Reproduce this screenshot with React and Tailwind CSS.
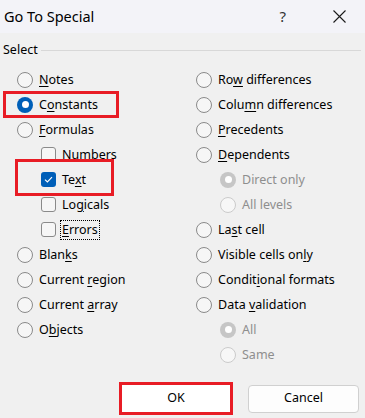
import React from "react";

const FONT = { fontFamily: '"Noto Sans", "Open Sans", sans-serif' };

// label with one underlined access key
function Label({ text, k, disabled }) {
  const i = k == null ? -1 : k;
  return (
    <span className={disabled ? "text-[#8e8e8e]" : "text-black"}>
      {i < 0 ? text : (
        <>
          {text.slice(0, i)}
          <span className="underline underline-offset-2">{text[i]}</span>
          {text.slice(i + 1)}
        </>
      )}
    </span>
  );
}

function Radio({ checked, disabled }) {
  if (disabled) {
    return checked ? (
      <span className="w-4 h-4 rounded-full bg-[#c6c6c6] flex items-center justify-center flex-shrink-0">
        <span className="w-[7px] h-[7px] rounded-full bg-white" />
      </span>
    ) : (
      <span className="w-4 h-4 rounded-full border border-[#cbcbcb] bg-[#f7f7f7] flex-shrink-0" />
    );
  }
  return checked ? (
    <span className="w-4 h-4 rounded-full bg-[#005fb8] flex items-center justify-center flex-shrink-0">
      <span className="w-[7px] h-[7px] rounded-full bg-white" />
    </span>
  ) : (
    <span className="w-4 h-4 rounded-full border border-[#8a8a8a] bg-[#f6f6f6] flex-shrink-0" />
  );
}

function Check({ checked }) {
  return checked ? (
    <span className="w-[15px] h-[15px] rounded-[3px] bg-[#005fb8] flex items-center justify-center flex-shrink-0">
      <svg width="9" height="7" viewBox="0 0 9 7" fill="none">
        <path d="M1 3.6 L3.4 6 L8 1.2" stroke="white" strokeWidth="1.2" />
      </svg>
    </span>
  ) : (
    <span className="w-[15px] h-[15px] rounded-[3px] border border-[#8a8a8a] bg-[#f6f6f6] flex-shrink-0" />
  );
}

function Row({ type, indent, checked, disabled, text, k, focus }) {
  return (
    <div className={`h-[25px] flex items-center ${indent ? "pl-[24px]" : ""}`}>
      {type === "check" ? <Check checked={checked} /> : <Radio checked={checked} disabled={disabled} />}
      <span className={`ml-[5px] px-px leading-[18px] ${focus ? "outline outline-1 outline-dotted outline-black" : ""}`}>
        <Label text={text} k={k} disabled={disabled} />
      </span>
    </div>
  );
}

const LEFT = [
  { text: "Notes", k: 0 },
  { text: "Constants", k: 1, checked: true },
  { text: "Formulas", k: 0 },
  { type: "check", indent: true, text: "Numbers", k: 1 },
  { type: "check", indent: true, text: "Text", k: 2, checked: true },
  { type: "check", indent: true, text: "Logicals", k: 2 },
  { type: "check", indent: true, text: "Errors", k: 0, focus: true },
  { text: "Blanks", k: 4 },
  { text: "Current region", k: 8 },
  { text: "Current array", k: 8 },
  { text: "Objects", k: 1 },
];

const RIGHT = [
  { text: "Row differences", k: 2 },
  { text: "Column differences", k: 4 },
  { text: "Precedents", k: 0 },
  { text: "Dependents", k: 0 },
  { indent: true, disabled: true, checked: true, text: "Direct only" },
  { indent: true, disabled: true, text: "All levels" },
  { text: "Last cell", k: 2 },
  { text: "Visible cells only", k: 16 },
  { text: "Conditional formats", k: 6 },
  { text: "Data validation", k: 5 },
  { indent: true, disabled: true, checked: true, text: "All" },
  { indent: true, disabled: true, text: "Same" },
];

export default function App() {
  return (
    <div className="w-[365px] h-[418px] bg-[#f0f0f0] relative overflow-hidden text-[12.5px]" style={FONT}>
      {/* Title bar */}
      <div className="h-[33px] bg-[#f3f3f8] flex items-center pl-[4px]">
        <span className="text-[14.5px] text-black">Go To Special</span>
        <span className="ml-auto text-[15px] text-[#333] mr-[47px]">?</span>
        <svg width="13" height="13" viewBox="0 0 13 13" className="mr-[19px]">
          <path d="M0.5 0.5 L12.5 12.5 M12.5 0.5 L0.5 12.5" stroke="#1a1a1a" strokeWidth="1.1" />
        </svg>
      </div>

      {/* Group legend */}
      <div className="mt-[9px] h-4 flex items-center pl-[3px] pr-[4px]">
        <span className="text-black">Select</span>
        <div className="flex-1 h-px bg-[#d8d8d8] ml-[3px]" />
      </div>

      <div className="mt-[9px] grid grid-cols-[179px_1fr] pl-[17px]">
        <div>{LEFT.map(r => <Row key={r.text} {...r} />)}</div>
        <div>{RIGHT.map(r => <Row key={r.text} {...r} />)}</div>
      </div>

      {/* Buttons */}
      <div className="absolute left-[119px] top-[382px] flex items-center">
        <button className="w-[114px] h-[33px] bg-white border-[3px] border-[#e81c25] text-black">OK</button>
        <button className="ml-[15px] w-[111px] h-[28px] bg-[#fdfdfd] border border-[#d0d0d0] rounded-[4px] text-black">Cancel</button>
      </div>

      {/* Red annotation boxes */}
      <div className="absolute left-[3px] top-[91px] w-[116px] h-[27px] border-[3px] border-[#e81c25] pointer-events-none" />
      <div className="absolute left-[15px] top-[159px] w-[99px] h-[37px] border-[3px] border-[#e81c25] pointer-events-none" />
    </div>
  );
}
